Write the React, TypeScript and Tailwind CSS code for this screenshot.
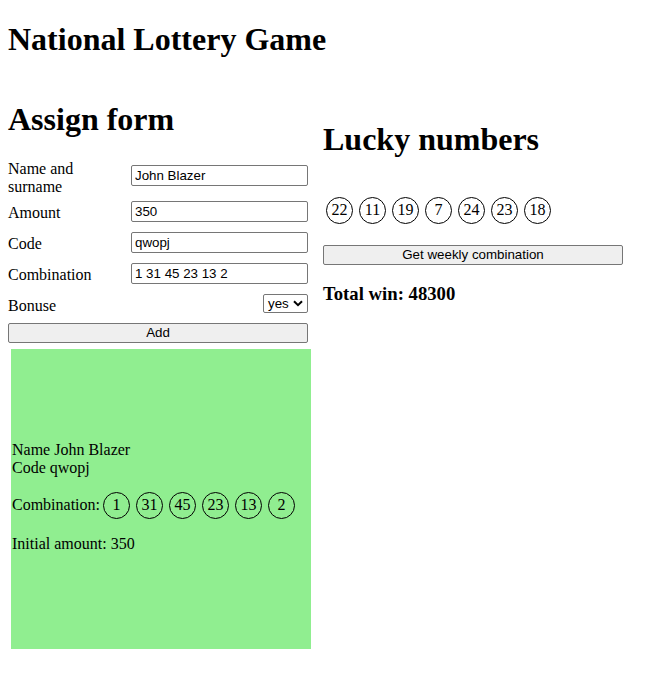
import React from "react";

const combination = [1, 31, 45, 23, 13, 2];
const luckyNumbers = [22, 11, 19, 7, 24, 23, 18];

const Ball: React.FC<{ value: number }> = ({ value }) => (
  <span className="mx-[3px] flex h-[27px] w-[27px] flex-none items-center justify-center rounded-full border border-black">
    {value}
  </span>
);

const inputClass =
  "h-[21px] w-[177px] rounded-[2px] border border-[#767676] bg-white px-[3px] py-0 font-['Liberation_Sans',Arial,sans-serif] text-[13.33px] text-black outline-none";

const buttonClass =
  "flex h-[20px] w-[300px] items-center justify-center rounded-[2px] border border-[#767676] bg-[#efefef] font-['Liberation_Sans',Arial,sans-serif] text-[13.33px] text-black";

const App: React.FC = () => {
  return (
    <div className="px-[8px] font-['Liberation_Serif','Times_New_Roman',serif] text-[16px] leading-[normal] text-black">
      <h1 className="mt-[21.44px] mb-[21.44px] text-[32px] font-bold">
        National Lottery Game
      </h1>

      <div className="flex items-start">
        <div className="w-[300px] flex-none">
          <h1 className="mt-[21.44px] mb-[21.44px] text-[32px] font-bold">
            Assign form
          </h1>

          <form onSubmit={(e) => e.preventDefault()}>
            <div className="flex items-start justify-between">
              <label className="w-[116px]">Name and surname</label>
              <input className={`${inputClass} mt-[5.6px]`} defaultValue="John Blazer" />
            </div>
            <div className="mt-[5px] flex h-[21px] items-start justify-between">
              <label className="pt-[3.5px]">Amount</label>
              <input className={inputClass} defaultValue="350" />
            </div>
            <div className="mt-[10px] flex h-[21px] items-start justify-between">
              <label className="pt-[3.5px]">Code</label>
              <input className={inputClass} defaultValue="qwopj" />
            </div>
            <div className="mt-[10px] flex h-[21px] items-start justify-between">
              <label className="pt-[3.5px]">Combination</label>
              <input className={inputClass} defaultValue="1 31 45 23 13 2" />
            </div>
            <div className="mt-[10px] flex h-[21px] items-start justify-between">
              <label className="pt-[3px]">Bonuse</label>
              <div className="flex h-[19px] w-[45px] items-center justify-between rounded-[2px] border border-[#767676] bg-white pr-[4px] pl-[4px] font-['Liberation_Sans',Arial,sans-serif] text-[13.33px]">
                <span>yes</span>
                <svg width="10" height="7" viewBox="0 0 10 7" fill="none">
                  <path d="M1 1.2 L5 5.2 L9 1.2" stroke="black" strokeWidth="2" />
                </svg>
              </div>
            </div>
            <button type="submit" className={`${buttonClass} mt-[8px]`}>
              Add
            </button>
          </form>

          <div className="mt-[6px] ml-[3px] flex h-[300px] w-[300px] flex-col justify-center bg-[#90ee90] pb-[4px] pl-[1px]">
            <div>Name John Blazer</div>
            <div>Code qwopj</div>
            <div className="mt-[15px] flex h-[27px] items-center">
              <span>Combination:</span>
              {combination.map((n, i) => (
                <Ball key={i} value={n} />
              ))}
            </div>
            <div className="mt-[16px]">Initial amount: 350</div>
          </div>
        </div>

        <div className="ml-[15px] w-[300px] flex-none pt-[20px]">
          <h1 className="mt-[21.44px] mb-[38.5px] text-[32px] font-bold">
            Lucky numbers
          </h1>
          <div className="flex">
            {luckyNumbers.map((n, i) => (
              <Ball key={i} value={n} />
            ))}
          </div>
          <button type="button" className={`${buttonClass} mt-[21px]`}>
            Get weekly combination
          </button>
          <h3 className="mt-[18px] text-[18.72px] font-bold">Total win: 48300</h3>
        </div>
      </div>
    </div>
  );
};

export default App;
